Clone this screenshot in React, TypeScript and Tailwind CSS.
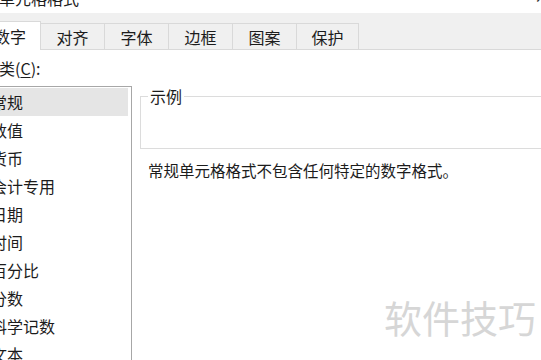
const tabs = [
  { label: "数字", w: "w-[62px]", active: true },
  { label: "对齐", w: "w-[65px]" },
  { label: "字体", w: "w-[65px]" },
  { label: "边框", w: "w-[65px]" },
  { label: "图案", w: "w-[65px]" },
  { label: "保护", w: "w-[63px]" },
];

const categories = [
  "常规",
  "数值",
  "货币",
  "会计专用",
  "日期",
  "时间",
  "百分比",
  "分数",
  "科学记数",
  "文本",
];

export default function App() {
  return (
    <div
      className="relative w-[541px] h-[360px] overflow-hidden bg-white text-[#1c1c1c]"
      style={{ fontFamily: '"Noto Sans CJK SC", "Noto Sans", sans-serif' }}
    >
      {/* title bar */}
      <div className="h-[13px] overflow-hidden flex justify-between">
        <span className="text-[16px] leading-[20px] -mt-[12px] -ml-[1px]">单元格格式</span>
        <span className="text-[14px] leading-[20px] -mt-[13px] -mr-[6px] text-[#333]">✕</span>
      </div>

      {/* tabs */}
      <div className="h-[37px] bg-[#f0f0f0] border-b border-[#d9d9d9] flex items-end">
        <div className="flex items-end -ml-[21px]">
          {tabs.map((t) =>
            t.active ? (
              <div
                key={t.label}
                className={`${t.w} h-[29px] -mb-px bg-white border border-b-0 border-[#d9d9d9] flex items-center justify-center text-[16px] leading-[20px] relative z-10`}
              >
                {t.label}
              </div>
            ) : (
              <div
                key={t.label}
                className={`${t.w} h-[26px] -ml-px border border-b-0 border-[#d9d9d9] flex items-center justify-center text-[16px] leading-[20px] pt-[1px]`}
              >
                {t.label}
              </div>
            )
          )}
        </div>
      </div>

      {/* body */}
      <div className="-ml-[17px] mt-[8px] text-[16px] leading-[20px]">
        分类(<span className="underline underline-offset-2">C</span>):
      </div>

      <div className="flex mt-[8px]">
        <div className="w-[143px] -ml-[11px] h-[300px] border border-[#a7a7a7] pt-[1px] pl-[1px] pr-[3px] shrink-0">
          {categories.map((c, i) => (
            <div
              key={c}
              className={`h-[28px] flex items-center text-[16px] leading-[20px] ${
                i === 0 ? "bg-[#e5e5e5]" : ""
              }`}
            >
              {c}
            </div>
          ))}
        </div>

        <div className="ml-[8px] flex-1">
          <fieldset className="w-[460px] h-[63px] border border-[#dcdcdc]">
            <legend className="ml-[7px] px-[2px] text-[16px] leading-[20px]">示例</legend>
          </fieldset>
          <div className="mt-[11px] ml-[8px] text-[15.5px] leading-[20px] whitespace-nowrap">
            常规单元格格式不包含任何特定的数字格式。
          </div>
        </div>
      </div>

      {/* watermark */}
      <div className="absolute left-[384px] top-[298px] text-[38px] leading-none text-[#d6d6d6] whitespace-nowrap pointer-events-none">
        软件技巧
      </div>
    </div>
  );
}
